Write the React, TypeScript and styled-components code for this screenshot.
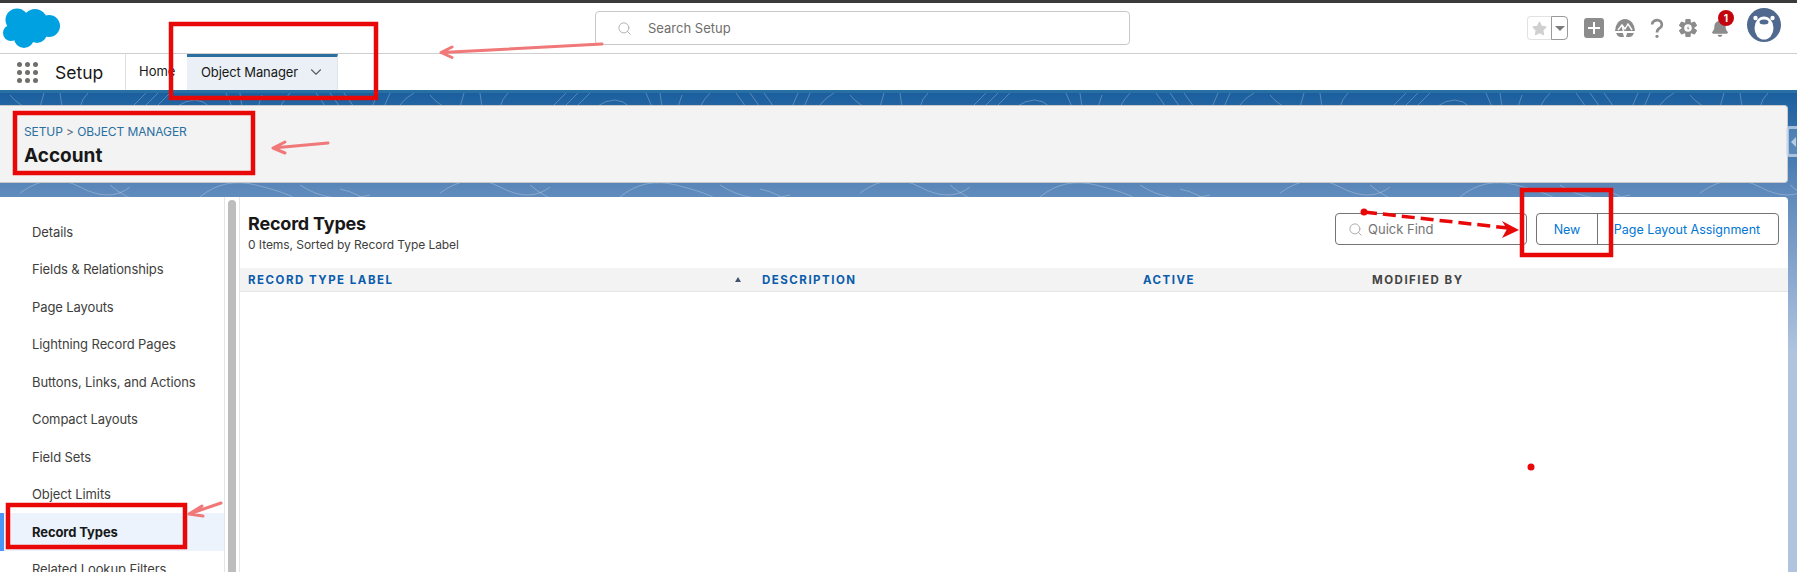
import { createGlobalStyle, styled } from "styled-components";
import { Search, ChevronDown } from "lucide-react";
import { FaBell, FaStar } from "react-icons/fa";

const patternSvg = encodeURIComponent(
  `<svg xmlns="http://www.w3.org/2000/svg" width="420" height="120" fill="none" stroke="#fff" stroke-opacity=".25" stroke-width="1">
  <path d="M10 2q8 10 20 14M44 0l-4 14M60 0l2 14M80 14q2-8 8-14M130 16l16-16M142 16l16-16M154 16l16-16M176 14q20-14 34 0M226 0l6 14M240 0l2 14M262 2l-4 12M280 14q4-8 10-14M316 0l10 14M330 0l10 14M344 0l10 14M372 14l6-14M384 14l6-14M400 12q6-8 14-12"/>
  <path d="M20 100q30-22 60-6t50 0M110 92q30 26 70 18M200 104q24-20 56-12t40 14M300 92q30 20 70 10M60 110l10 8M150 112l14 6M240 110q10 6 22 4M340 96q20 4 34 18"/>
  </svg>`
);

const GlobalStyle = createGlobalStyle`
  html, body {
    margin: 0;
    padding: 0;
    background: #fff;
    font-family: Inter, "Liberation Sans", sans-serif;
  }
  * { box-sizing: border-box; }
`;

const Page = styled.div`
  position: relative;
  display: flex;
  flex-direction: column;
  width: 1797px;
  height: 572px;
  overflow: hidden;
`;

const TopStrip = styled.div`
  height: 3px;
  background: #3b3b3b;
`;

const Header = styled.header`
  display: flex;
  align-items: center;
  height: 51px;
  padding-left: 3px;
  background: #fff;
  border-bottom: 1px solid #cfcfcf;
`;

const Logo = styled.svg`
  width: 58px;
  height: 41px;
  flex: none;
`;

const GlobalSearch = styled.div`
  display: flex;
  align-items: center;
  width: 535px;
  height: 34px;
  margin-left: 534px;
  padding-left: 21px;
  gap: 16px;
  border: 1px solid #c9c9c9;
  border-radius: 4px;
  font-size: 13px;
  color: #706e6b;
`;

const HeaderIcons = styled.div`
  display: flex;
  align-items: center;
  margin-left: 397px;
  height: 50px;
`;

const FavGroup = styled.div`
  display: flex;
  width: 41px;
  height: 24px;
  margin-right: 16px;
`;

const FavStar = styled.div`
  display: flex;
  align-items: center;
  justify-content: center;
  width: 24px;
  border: 1px solid #e2e2e2;
  border-right: none;
  border-radius: 4px 0 0 4px;
  color: #d0d0d0;
`;

const FavMenu = styled.div`
  display: flex;
  align-items: center;
  justify-content: center;
  width: 17px;
  border: 1px solid #9a9a9a;
  border-radius: 0 4px 4px 0;

  &::after {
    content: "";
    border-left: 5px solid transparent;
    border-right: 5px solid transparent;
    border-top: 5px solid #7b7b7b;
  }
`;

const PlusButton = styled.div`
  position: relative;
  width: 20px;
  height: 20px;
  margin-right: 9px;
  background: #8c8c8c;
  border-radius: 3px;

  &::before, &::after {
    content: "";
    position: absolute;
    background: #fff;
  }
  &::before { left: 4px; right: 4px; top: 9px; height: 2px; }
  &::after { top: 4px; bottom: 4px; left: 9px; width: 2px; }
`;

const IconSlot = styled.div<{ $w: number }>`
  display: flex;
  align-items: center;
  justify-content: center;
  position: relative;
  width: ${(p) => p.$w}px;
  height: 24px;
  color: #8c8c8c;
`;

const Badge = styled.span`
  position: absolute;
  top: -6px;
  left: 18px;
  display: flex;
  align-items: center;
  justify-content: center;
  width: 16px;
  height: 16px;
  border-radius: 50%;
  background: #c4040c;
  color: #fff;
  font-size: 10px;
  font-weight: 700;
`;

const Avatar = styled.svg`
  width: 34px;
  height: 34px;
  margin: -6px 0 0 7px;
`;

const NavBar = styled.nav`
  display: flex;
  align-items: stretch;
  height: 36px;
  background: #fff;
`;

const Launcher = styled.div`
  display: grid;
  grid-template-columns: repeat(3, 5px);
  gap: 3px;
  align-content: center;
  padding-left: 17px;
  box-sizing: content-box;
  width: 21px;
  span {
    width: 5px;
    height: 5px;
    border-radius: 50%;
    background: #706e6b;
  }
`;

const AppName = styled.div`
  display: flex;
  align-items: center;
  width: 88px;
  padding-left: 17px;
  font-size: 17.500px;
  color: #181818;
  border-right: 1px solid #e0e0e0;
`;

const HomeTab = styled.div`
  display: flex;
  align-items: center;
  width: 61px;
  padding: 0 0 2px 13px;
  font-size: 13px;
  color: #181818;
  overflow: hidden;
`;

const ActiveTab = styled.div`
  display: flex;
  align-items: center;
  justify-content: space-between;
  width: 151px;
  padding: 0 12px 3px 14px;
  font-size: 13px;
  letter-spacing: -0.1px;
  color: #181818;
  background: #eaf0f5;
  border-top: 3px solid #2a6f9f;
  border-right: 1px solid #dfe5ea;
`;

const Canvas = styled.main`
  flex: 1;
  min-height: 0;
  display: flex;
  flex-direction: column;
  gap: 14px;
  padding: 12px 9px 0 0;
  border-top: 3px solid #2870a4;
  background-color: #b0c4e0;
  background-image: url("data:image/svg+xml,${patternSvg}"),
    linear-gradient(#1b5f9f 0, #5f8abc 100px, #b0c4e0 260px);
  background-repeat: repeat-x, no-repeat;
  background-position: 0 0, 0 0;
`;

const TitlePanel = styled.section`
  height: 78px;
  flex: none;
  padding: 17px 0 0 24px;
  background: #f3f3f3;
  border: 1px solid #c9c9c9;
  border-left: none;
  border-radius: 0 4px 4px 0;
`;

const Crumbs = styled.div`
  font-size: 12px;
  line-height: 18px;
  letter-spacing: -0.1px;
  color: #5d6a73;

  a { color: #2a6f9f; text-decoration: none; }
`;

const ObjectName = styled.h1`
  margin: 2px 0 0;
  font-size: 19px;
  line-height: 26px;
  font-weight: 700;
  color: #181818;
`;

const CollapseHandle = styled.div`
  position: absolute;
  top: 126px;
  right: 0;
  display: flex;
  align-items: center;
  justify-content: center;
  width: 11px;
  height: 31px;
  background: rgba(255, 255, 255, 0.12);
  border: 3px solid rgba(205, 220, 238, 0.7);
  border-right: none;
  border-radius: 4px 0 0 4px;

  &::after {
    content: "";
    border-top: 5px solid transparent;
    border-bottom: 5px solid transparent;
    border-right: 5px solid rgba(205, 220, 238, 0.8);
  }
`;

const Workspace = styled.section`
  flex: 1;
  min-height: 0;
  display: flex;
  background: #fff;
  border-radius: 0 4px 0 0;
  overflow: hidden;
`;

const Sidebar = styled.ul`
  flex: none;
  width: 225px;
  margin: 0;
  padding: 16px 0 0;
  list-style: none;
  border-right: 1px solid #e5e5e5;
`;

const SideItem = styled.li<{ $active?: boolean }>`
  display: flex;
  align-items: center;
  height: 37.500px;
  padding-left: ${(p) => (p.$active ? 28 : 32)}px;
  font-size: 13px;
  letter-spacing: -0.1px;
  font-weight: ${(p) => (p.$active ? 700 : 400)};
  color: ${(p) => (p.$active ? "#181818" : "#3e3e3c")};
  background: ${(p) => (p.$active ? "#ecf3fd" : "transparent")};
  border-left: ${(p) => (p.$active ? "4px solid #4a97f5" : "none")};
  white-space: nowrap;
`;

const ScrollTrack = styled.div`
  flex: none;
  width: 15px;
  padding: 3px 3px 0;
  border-right: 1px solid #e5e5e5;
`;

const ScrollThumb = styled.div`
  height: 100%;
  width: 8px;
  background: #bdbdbd;
  border-radius: 4px 4px 0 0;
`;

const Content = styled.div`
  flex: 1;
  min-width: 0;
`;

const ContentHead = styled.div`
  display: flex;
  justify-content: space-between;
  height: 71px;
  padding: 16px 9px 0 8px;
`;

const Heading = styled.h2`
  margin: 1px 0 0;
  font-size: 18px;
  line-height: 20px;
  font-weight: 700;
  letter-spacing: -0.2px;
  color: #181818;
`;

const ItemCount = styled.div`
  margin-top: 2px;
  font-size: 12px;
  line-height: 18px;
  letter-spacing: -0.06px;
  color: #3e3e3c;
`;

const Actions = styled.div`
  display: flex;
  gap: 9px;
  height: 32px;
`;

const QuickFind = styled.div`
  display: flex;
  align-items: center;
  gap: 5px;
  width: 192px;
  padding-left: 12px;
  border: 1px solid #747474;
  border-radius: 4px;
  font-size: 13px;
  color: #747474;
`;

const ButtonGroup = styled.div`
  display: flex;
  width: 243px;
  border: 1px solid #747474;
  border-radius: 4px;
`;

const ActionButton = styled.div<{ $w: number }>`
  display: flex;
  align-items: center;
  justify-content: center;
  width: ${(p) => p.$w}px;
  font-size: 12.500px;
  color: #0176d3;
  white-space: nowrap;

  & + & { border-left: 1px solid #747474; flex: 1; padding-right: 2px; }
`;

const TableHead = styled.div`
  display: grid;
  grid-template-columns: 514px 381px 229px 1fr;
  align-items: center;
  height: 24px;
  padding-left: 8px;
  background: #f3f3f3;
  border-bottom: 1px solid #e5e5e5;
`;

const HeadCell = styled.div<{ $muted?: boolean }>`
  display: flex;
  align-items: center;
  justify-content: space-between;
  padding-right: 21px;
  font-size: 11.500px;
  font-weight: 700;
  letter-spacing: 1.500px;
  color: ${(p) => (p.$muted ? "#444" : "#0b5cab")};
`;

const SortArrow = styled.span`
  border-left: 3.500px solid transparent;
  border-right: 3.500px solid transparent;
  border-bottom: 5px solid #44546a;
`;

const Annotations = styled.svg`
  position: absolute;
  left: 0;
  top: 0;
  pointer-events: none;
`;

const sideLinks = [
  "Details",
  "Fields & Relationships",
  "Page Layouts",
  "Lightning Record Pages",
  "Buttons, Links, and Actions",
  "Compact Layouts",
  "Field Sets",
  "Object Limits",
  "Record Types",
  "Related Lookup Filters",
];

function CloudLogo() {
  return (
    <Logo viewBox="3 8 58 41" fill="#00a1e0">
      <circle cx="17" cy="20" r="11.500" />
      <circle cx="35" cy="21" r="12" />
      <circle cx="49" cy="26" r="11" />
      <circle cx="11" cy="33" r="8" />
      <circle cx="24" cy="38" r="10" />
      <circle cx="37" cy="33" r="10" />
      <rect x="14" y="20" width="36" height="16" />
    </Logo>
  );
}

function TrailIcon() {
  return (
    <svg width="22" height="22" viewBox="0 0 22 22">
      <path d="M1 14a10 12 0 0 1 20 0z" fill="#8c8c8c" />
      <path d="M2 16h7l1 4H6q-3-1-4-4zM20 16h-7l-1 4h4q3-1 4-4z" fill="#8c8c8c" />
      <path d="M4 13l4-5 3 4 3-5 4 6M8 8l3 12" fill="none" stroke="#fff" strokeWidth="1.400" />
    </svg>
  );
}

function HelpIcon() {
  return (
    <svg width="14" height="22" viewBox="0 0 16 24">
      <path d="M2.500 8a5.500 5 0 1 1 8.500 4.200C9 13.500 8 14.500 8 17" fill="none" stroke="#8c8c8c" strokeWidth="3" />
      <circle cx="8" cy="21.500" r="1.800" fill="#8c8c8c" />
    </svg>
  );
}

function GearIcon() {
  const teeth = [0, 60, 120, 180, 240, 300];
  return (
    <svg width="18" height="18" viewBox="0 0 18 18">
      {teeth.map((a) => (
        <rect key={a} x="6.500" y="0" width="5" height="18" rx="1" fill="#8c8c8c" transform={`rotate(${a} 9 9)`} />
      ))}
      <circle cx="9" cy="9" r="6.500" fill="#8c8c8c" />
      <circle cx="9" cy="9" r="3.800" fill="#fff" />
      <path d="M9.800 6.500L7.600 9.400h1.600L8.400 11.700l2.200-3H9z" fill="#8c8c8c" />
    </svg>
  );
}

function BearAvatar() {
  return (
    <Avatar viewBox="0 0 34 34">
      <circle cx="17" cy="17" r="17" fill="#50698f" />
      <circle cx="8.500" cy="10" r="2.200" fill="#fff" />
      <circle cx="25.500" cy="10" r="2.200" fill="#fff" />
      <ellipse cx="17" cy="20" rx="9.500" ry="11.500" fill="#fff" />
      <ellipse cx="17" cy="14" rx="4.500" ry="2.500" fill="#50698f" />
    </Avatar>
  );
}

function App() {
  const dots = Array.from({ length: 9 });
  return (
    <Page>
      <GlobalStyle />
      <TopStrip />
      <Header>
        <CloudLogo />
        <GlobalSearch>
          <Search size={15} color="#b0adab" strokeWidth={1.5} />
          Search Setup
        </GlobalSearch>
        <HeaderIcons>
          <FavGroup>
            <FavStar>
              <FaStar size={15} />
            </FavStar>
            <FavMenu />
          </FavGroup>
          <PlusButton />
          <IconSlot $w={24}>
            <TrailIcon />
          </IconSlot>
          <IconSlot $w={39}>
            <HelpIcon />
          </IconSlot>
          <IconSlot $w={24}>
            <GearIcon />
          </IconSlot>
          <IconSlot $w={40}>
            <FaBell size={18} />
            <Badge>1</Badge>
          </IconSlot>
          <BearAvatar />
        </HeaderIcons>
      </Header>
      <NavBar>
        <Launcher>
          {dots.map((_, i) => (
            <span key={i} />
          ))}
        </Launcher>
        <AppName>Setup</AppName>
        <HomeTab>Home</HomeTab>
        <ActiveTab>
          Object Manager
          <ChevronDown size={18} color="#5c5c5c" strokeWidth={1.5} />
        </ActiveTab>
      </NavBar>
      <Canvas>
        <TitlePanel>
          <Crumbs>
            <a href="#setup">SETUP</a> &gt; <a href="#manager">OBJECT MANAGER</a>
          </Crumbs>
          <ObjectName>Account</ObjectName>
        </TitlePanel>
        <Workspace>
          <Sidebar>
            {sideLinks.map((link) => (
              <SideItem key={link} $active={link === "Record Types"}>
                {link}
              </SideItem>
            ))}
          </Sidebar>
          <ScrollTrack>
            <ScrollThumb />
          </ScrollTrack>
          <Content>
            <ContentHead>
              <div>
                <Heading>Record Types</Heading>
                <ItemCount>0 Items, Sorted by Record Type Label</ItemCount>
              </div>
              <Actions>
                <QuickFind>
                  <Search size={15} color="#a8a8a8" strokeWidth={1.5} />
                  Quick Find
                </QuickFind>
                <ButtonGroup>
                  <ActionButton $w={60}>New</ActionButton>
                  <ActionButton $w={182}>Page Layout Assignment</ActionButton>
                </ButtonGroup>
              </Actions>
            </ContentHead>
            <TableHead>
              <HeadCell>
                RECORD TYPE LABEL
                <SortArrow />
              </HeadCell>
              <HeadCell>DESCRIPTION</HeadCell>
              <HeadCell>ACTIVE</HeadCell>
              <HeadCell $muted>MODIFIED BY</HeadCell>
            </TableHead>
          </Content>
        </Workspace>
      </Canvas>
      <CollapseHandle />
      <Annotations width="1797" height="572" fill="none">
        <g stroke="#e80808" strokeWidth="4.500">
          <rect x="171" y="24" width="205" height="74" />
          <rect x="15" y="113" width="238" height="60" />
          <rect x="8" y="505" width="177" height="42" />
          <rect x="1522" y="190" width="89" height="65" />
        </g>
        <g stroke="#f07878" strokeWidth="3" strokeLinecap="round" strokeLinejoin="round">
          <path d="M602 44L442 52.500M452 47l-11 5.500 11 5" />
          <path d="M328 143L273 148M285 142l-12 6 12 5" />
          <path d="M221 503L189 514M202 506l-13 8 14 2" />
        </g>
        <path d="M1364 212L1508 228" stroke="#e80808" strokeWidth="3.500" strokeDasharray="13 6" />
        <circle cx="1364" cy="212" r="3.500" fill="#e80808" />
        <path d="M1519 230L1502 221L1507 229L1502 238Z" fill="#e80808" />
        <circle cx="1531" cy="467" r="3.500" fill="#e80808" />
      </Annotations>
    </Page>
  );
}

export default App;
